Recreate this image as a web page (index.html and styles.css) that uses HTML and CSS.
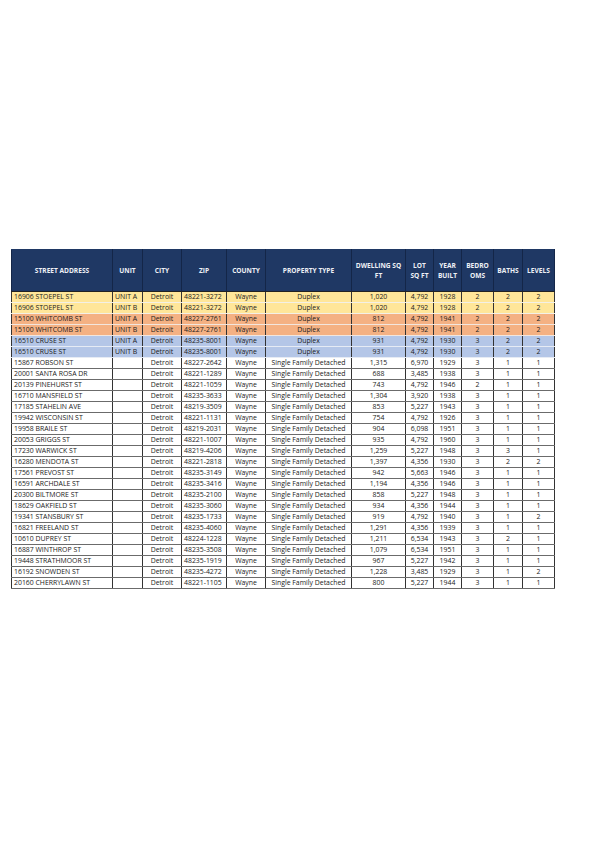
FILE: index.html
```html
<!DOCTYPE html>
<html>
<head>
<meta charset="utf-8">
<link rel="stylesheet" href="styles.css">
</head>
<body>
<div class="page">
<table class="grid">
<colgroup>
<col class="c-addr"><col class="c-unit"><col class="c-city"><col class="c-zip"><col class="c-county"><col class="c-type"><col class="c-dwell"><col class="c-lot"><col class="c-year"><col class="c-bed"><col class="c-bath"><col class="c-lev">
</colgroup>
<thead>
<tr>
<th>STREET ADDRESS</th><th>UNIT</th><th>CITY</th><th>ZIP</th><th>COUNTY</th><th>PROPERTY TYPE</th><th>DWELLING SQ<br>FT</th><th>LOT<br>SQ FT</th><th>YEAR<br>BUILT</th><th>BEDRO<br>OMS</th><th>BATHS</th><th>LEVELS</th>
</tr>
</thead>
<tbody>
<tr class="yellow"><td class="l">16906 STOEPEL ST</td><td class="l">UNIT A</td><td>Detroit</td><td class="l">48221-3272</td><td>Wayne</td><td>Duplex</td><td>1,020</td><td>4,792</td><td>1928</td><td>2</td><td>2</td><td>2</td></tr>
<tr class="yellow"><td class="l">16906 STOEPEL ST</td><td class="l">UNIT B</td><td>Detroit</td><td class="l">48221-3272</td><td>Wayne</td><td>Duplex</td><td>1,020</td><td>4,792</td><td>1928</td><td>2</td><td>2</td><td>2</td></tr>
<tr class="orange"><td class="l">15100 WHITCOMB ST</td><td class="l">UNIT A</td><td>Detroit</td><td class="l">48227-2761</td><td>Wayne</td><td>Duplex</td><td>812</td><td>4,792</td><td>1941</td><td>2</td><td>2</td><td>2</td></tr>
<tr class="orange"><td class="l">15100 WHITCOMB ST</td><td class="l">UNIT B</td><td>Detroit</td><td class="l">48227-2761</td><td>Wayne</td><td>Duplex</td><td>812</td><td>4,792</td><td>1941</td><td>2</td><td>2</td><td>2</td></tr>
<tr class="blue"><td class="l">16510 CRUSE ST</td><td class="l">UNIT A</td><td>Detroit</td><td class="l">48235-8001</td><td>Wayne</td><td>Duplex</td><td>931</td><td>4,792</td><td>1930</td><td>3</td><td>2</td><td>2</td></tr>
<tr class="blue"><td class="l">16510 CRUSE ST</td><td class="l">UNIT B</td><td>Detroit</td><td class="l">48235-8001</td><td>Wayne</td><td>Duplex</td><td>931</td><td>4,792</td><td>1930</td><td>3</td><td>2</td><td>2</td></tr>
<tr><td class="l">15867 ROBSON ST</td><td class="l"></td><td>Detroit</td><td class="l">48227-2642</td><td>Wayne</td><td>Single Family Detached</td><td>1,315</td><td>6,970</td><td>1929</td><td>3</td><td>1</td><td>1</td></tr>
<tr><td class="l">20001 SANTA ROSA DR</td><td class="l"></td><td>Detroit</td><td class="l">48221-1289</td><td>Wayne</td><td>Single Family Detached</td><td>688</td><td>3,485</td><td>1938</td><td>3</td><td>1</td><td>1</td></tr>
<tr><td class="l">20139 PINEHURST ST</td><td class="l"></td><td>Detroit</td><td class="l">48221-1059</td><td>Wayne</td><td>Single Family Detached</td><td>743</td><td>4,792</td><td>1946</td><td>2</td><td>1</td><td>1</td></tr>
<tr><td class="l">16710 MANSFIELD ST</td><td class="l"></td><td>Detroit</td><td class="l">48235-3633</td><td>Wayne</td><td>Single Family Detached</td><td>1,304</td><td>3,920</td><td>1938</td><td>3</td><td>1</td><td>1</td></tr>
<tr><td class="l">17185 STAHELIN AVE</td><td class="l"></td><td>Detroit</td><td class="l">48219-3509</td><td>Wayne</td><td>Single Family Detached</td><td>853</td><td>5,227</td><td>1943</td><td>3</td><td>1</td><td>1</td></tr>
<tr><td class="l">19942 WISCONSIN ST</td><td class="l"></td><td>Detroit</td><td class="l">48221-1131</td><td>Wayne</td><td>Single Family Detached</td><td>754</td><td>4,792</td><td>1926</td><td>3</td><td>1</td><td>1</td></tr>
<tr><td class="l">19958 BRAILE ST</td><td class="l"></td><td>Detroit</td><td class="l">48219-2031</td><td>Wayne</td><td>Single Family Detached</td><td>904</td><td>6,098</td><td>1951</td><td>3</td><td>1</td><td>1</td></tr>
<tr><td class="l">20053 GRIGGS ST</td><td class="l"></td><td>Detroit</td><td class="l">48221-1007</td><td>Wayne</td><td>Single Family Detached</td><td>935</td><td>4,792</td><td>1960</td><td>3</td><td>1</td><td>1</td></tr>
<tr><td class="l">17230 WARWICK ST</td><td class="l"></td><td>Detroit</td><td class="l">48219-4206</td><td>Wayne</td><td>Single Family Detached</td><td>1,259</td><td>5,227</td><td>1948</td><td>3</td><td>3</td><td>1</td></tr>
<tr><td class="l">16280 MENDOTA ST</td><td class="l"></td><td>Detroit</td><td class="l">48221-2818</td><td>Wayne</td><td>Single Family Detached</td><td>1,397</td><td>4,356</td><td>1930</td><td>3</td><td>2</td><td>2</td></tr>
<tr><td class="l">17561 PREVOST ST</td><td class="l"></td><td>Detroit</td><td class="l">48235-3149</td><td>Wayne</td><td>Single Family Detached</td><td>942</td><td>5,663</td><td>1946</td><td>3</td><td>1</td><td>1</td></tr>
<tr><td class="l">16591 ARCHDALE ST</td><td class="l"></td><td>Detroit</td><td class="l">48235-3416</td><td>Wayne</td><td>Single Family Detached</td><td>1,194</td><td>4,356</td><td>1946</td><td>3</td><td>1</td><td>1</td></tr>
<tr><td class="l">20300 BILTMORE ST</td><td class="l"></td><td>Detroit</td><td class="l">48235-2100</td><td>Wayne</td><td>Single Family Detached</td><td>858</td><td>5,227</td><td>1948</td><td>3</td><td>1</td><td>1</td></tr>
<tr><td class="l">18629 OAKFIELD ST</td><td class="l"></td><td>Detroit</td><td class="l">48235-3060</td><td>Wayne</td><td>Single Family Detached</td><td>934</td><td>4,356</td><td>1944</td><td>3</td><td>1</td><td>1</td></tr>
<tr><td class="l">19341 STANSBURY ST</td><td class="l"></td><td>Detroit</td><td class="l">48235-1733</td><td>Wayne</td><td>Single Family Detached</td><td>919</td><td>4,792</td><td>1940</td><td>3</td><td>1</td><td>2</td></tr>
<tr><td class="l">16821 FREELAND ST</td><td class="l"></td><td>Detroit</td><td class="l">48235-4060</td><td>Wayne</td><td>Single Family Detached</td><td>1,291</td><td>4,356</td><td>1939</td><td>3</td><td>1</td><td>1</td></tr>
<tr><td class="l">10610 DUPREY ST</td><td class="l"></td><td>Detroit</td><td class="l">48224-1228</td><td>Wayne</td><td>Single Family Detached</td><td>1,211</td><td>6,534</td><td>1943</td><td>3</td><td>2</td><td>1</td></tr>
<tr><td class="l">16887 WINTHROP ST</td><td class="l"></td><td>Detroit</td><td class="l">48235-3508</td><td>Wayne</td><td>Single Family Detached</td><td>1,079</td><td>6,534</td><td>1951</td><td>3</td><td>1</td><td>1</td></tr>
<tr><td class="l">19448 STRATHMOOR ST</td><td class="l"></td><td>Detroit</td><td class="l">48235-1919</td><td>Wayne</td><td>Single Family Detached</td><td>967</td><td>5,227</td><td>1942</td><td>3</td><td>1</td><td>1</td></tr>
<tr><td class="l">16192 SNOWDEN ST</td><td class="l"></td><td>Detroit</td><td class="l">48235-4272</td><td>Wayne</td><td>Single Family Detached</td><td>1,228</td><td>3,485</td><td>1929</td><td>3</td><td>1</td><td>2</td></tr>
<tr><td class="l">20160 CHERRYLAWN ST</td><td class="l"></td><td>Detroit</td><td class="l">48221-1105</td><td>Wayne</td><td>Single Family Detached</td><td>800</td><td>5,227</td><td>1944</td><td>3</td><td>1</td><td>1</td></tr>
</tbody>
</table>
</div>
</body>
</html>
```
FILE: styles.css
```css
html, body {
  margin: 0;
  padding: 0;
  background: #ffffff;
}

.page {
  width: 595px;
  height: 842px;
  padding: 249px 0 0 11px;
  box-sizing: border-box;
}

.grid {
  border-collapse: collapse;
  table-layout: fixed;
  width: 543px;
  font-family: "Open Sans", "Noto Sans", sans-serif;
  color: #1a1a1a;
}

.c-addr { width: 101px; }
.c-unit { width: 30px; }
.c-city { width: 39px; }
.c-zip { width: 45px; }
.c-county { width: 39px; }
.c-type { width: 86px; }
.c-dwell { width: 54px; }
.c-lot { width: 28px; }
.c-year { width: 28px; }
.c-bed { width: 32px; }
.c-bath { width: 29px; }
.c-lev { width: 32px; }

.grid th {
  height: 41px;
  padding: 0;
  background: #1f3864;
  color: #eef0f6;
  font-size: 6.6px;
  font-weight: 700;
  line-height: 10px;
  text-align: center;
  vertical-align: middle;
  border-left: 1px solid #142648;
  border-right: 1px solid #142648;
  border-top: 1px solid #1f3864;
  border-bottom: 1px solid #222222;
  white-space: nowrap;
}

.grid td {
  height: 10px;
  padding: 0 2px;
  font-size: 6.9px;
  line-height: 9.9px;
  text-align: center;
  white-space: nowrap;
  overflow: hidden;
  border-left: 1px solid #333333;
  border-right: 1px solid #333333;
  border-top: 1px solid #6b6b6b;
  border-bottom: 1px solid #6b6b6b;
}

.grid td.l {
  text-align: left;
}

.grid tr.yellow td {
  background: #ffe699;
  border-top-color: #f3f0e6;
  border-bottom-color: #f3f0e6;
}

.grid tr.orange td {
  background: #f4b183;
  border-top-color: #f2e6de;
  border-bottom-color: #f2e6de;
}

.grid tr.blue td {
  background: #b4c6e7;
  border-top-color: #e6ebf4;
  border-bottom-color: #e6ebf4;
}

.grid tbody tr:first-child td {
  border-top-color: #222222;
}
```
